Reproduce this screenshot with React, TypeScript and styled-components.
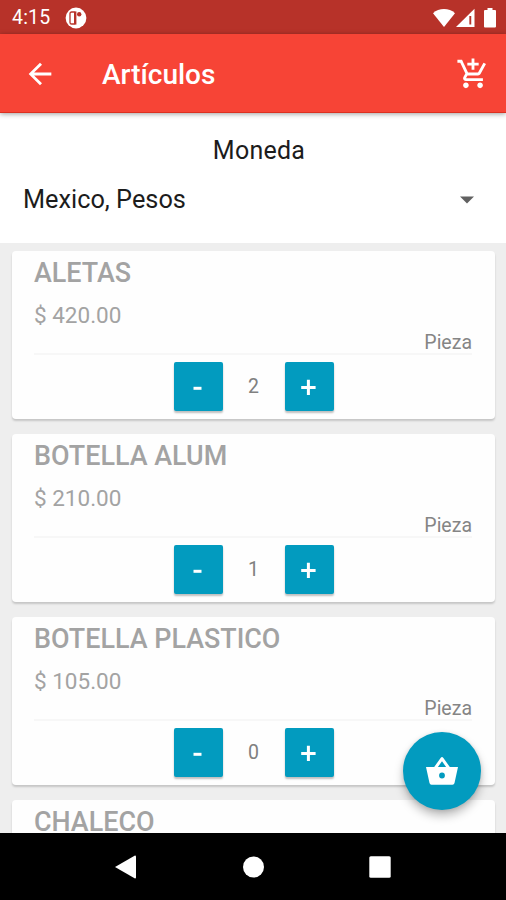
import React, { useState } from "react";
import styled, { createGlobalStyle } from "styled-components";
import { MdAddShoppingCart, MdArrowBack } from "react-icons/md";

const GlobalStyle = createGlobalStyle`
  * { box-sizing: border-box; }
  body { margin: 0; background: #eeeeee; font-family: Roboto, sans-serif; }
  button { font-family: inherit; border: 0; padding: 0; background: none; }
`;

const Screen = styled.div`
  position: relative;
  display: flex;
  flex-direction: column;
  width: 506px;
  height: 900px;
  overflow: hidden;
  background: #eeeeee;
`;

const StatusBar = styled.div`
  flex: none;
  display: flex;
  align-items: center;
  height: 34px;
  padding: 1px 10px 0 12px;
  background: #b73229;
  color: #fff;
`;

const Clock = styled.span`
  width: 53px;
  padding-top: 1px;
  font-size: 19.5px;
  line-height: 22px;
  letter-spacing: 0.2px;
`;

const StatusIcons = styled.div`
  display: flex;
  align-items: center;
  margin-left: auto;
`;

const BatterySlot = styled.div`
  display: flex;
  padding-left: 8px;
`;

const AppBar = styled.header`
  flex: none;
  display: flex;
  align-items: center;
  height: 79px;
  padding: 1px 16px 0 23px;
  background: #f74436;
  border-bottom: 1px solid #dc3020;
  color: #fff;
  box-shadow: 0 1px 5px rgba(0, 0, 0, 0.38);
  z-index: 1;
`;

const IconButton = styled.button`
  display: flex;
  color: #fff;
`;

const Title = styled.h1`
  flex: 1;
  margin: 2px 0 0 45px;
  font-size: 28px;
  font-weight: 500;
  line-height: 34px;
`;

const CurrencyPanel = styled.section`
  flex: none;
  height: 130px;
  padding: 21px 30px 0 23px;
  background: #fff;
`;

const CurrencyLabel = styled.div`
  padding-left: 19px;
  text-align: center;
  font-size: 25px;
  line-height: 34px;
  letter-spacing: 0.25px;
  color: #1c1c1c;
`;

const CurrencySelect = styled.button`
  display: flex;
  align-items: center;
  justify-content: space-between;
  width: 100%;
  margin-top: 15px;
  padding-right: 2px;
  font-size: 25.3px;
  line-height: 34px;
  color: #1c1c1c;
`;

const List = styled.main`
  flex: 1;
  min-height: 0;
  display: flex;
  flex-direction: column;
  gap: 15px;
  padding: 8px 11px 0 12px;
  overflow: hidden;
`;

const Card = styled.article`
  flex: none;
  height: 168px;
  padding: 5px 23px 0 22px;
  border-radius: 4px;
  background: #fefefe;
  box-shadow: 0 2px 2px rgba(0, 0, 0, 0.17);
`;

const Name = styled.h2`
  margin: 0;
  font-size: 26.9px;
  font-weight: 500;
  line-height: 34px;
  color: #a3a3a3;
`;

const Price = styled.div`
  margin-top: 11px;
  font-size: 22.5px;
  line-height: 28px;
  color: #a3a3a3;
`;

const Unit = styled.div`
  height: 26px;
  border-bottom: 2px solid #f7f7f7;
  text-align: right;
  font-size: 19.5px;
  line-height: 27px;
  color: #858585;
`;

const Stepper = styled.div`
  display: flex;
  justify-content: center;
  margin-top: 7px;
  padding-left: 1px;
`;

const StepButton = styled.button`
  display: flex;
  align-items: center;
  justify-content: center;
  width: 49px;
  height: 49px;
  border-radius: 2px;
  background: #029bbf;
  color: #fff;
  box-shadow: 0 2px 2px rgba(0, 0, 0, 0.25);
`;

const Quantity = styled.span`
  width: 62px;
  text-align: center;
  font-size: 19.5px;
  line-height: 50px;
  color: #808080;
`;

const BasketButton = styled.button`
  position: absolute;
  right: 25px;
  bottom: 90px;
  display: flex;
  align-items: center;
  justify-content: center;
  width: 78px;
  height: 78px;
  border-radius: 50%;
  background: #029bbf;
  color: #fff;
  box-shadow: 0 6px 10px rgba(0, 0, 0, 0.25), 0 1px 4px rgba(0, 0, 0, 0.12);
`;

const NavBar = styled.nav`
  flex: none;
  display: flex;
  align-items: center;
  justify-content: space-between;
  height: 67px;
  padding: 0 115px;
  background: #000;
`;

type Article = { name: string; price?: string; initial?: number };

const items: Article[] = [
  { name: "ALETAS", price: "$ 420.00", initial: 2 },
  { name: "BOTELLA ALUM", price: "$ 210.00", initial: 1 },
  { name: "BOTELLA PLASTICO", price: "$ 105.00", initial: 0 },
  { name: "CHALECO" },
];

function NotificationIcon() {
  return (
    <svg width="22" height="22" viewBox="0 0 22 22">
      <circle cx="11" cy="11" r="10.4" fill="#fff" />
      <path d="M9.6 5H6.600Q5 5 5 6.600v8.800Q5 17 6.600 17h3" fill="none" stroke="#b73229" strokeWidth="1.300" />
      <path d="M10.200 4.400v13.200" stroke="#b73229" strokeWidth="2.400" />
      <circle cx="14.200" cy="7.200" r="2.200" fill="#b73229" />
    </svg>
  );
}

function WifiIcon() {
  return (
    <svg width="24" height="20" viewBox="0 0 24 20">
      <path d="M12 19 1 5.200C4 2.400 7.900 1 12 1s8 1.400 11 4.200z" fill="#fff" />
    </svg>
  );
}

function SignalIcon() {
  return (
    <svg width="20" height="20" viewBox="0 0 20 20">
      <path d="M0 19 18.500.8V19z" fill="#fff" />
      <path d="M14.300 8v8.500" stroke="#b73229" strokeWidth="1.900" />
    </svg>
  );
}

function BatteryIcon() {
  return (
    <svg width="12" height="20" viewBox="0 0 12 20">
      <path d="M3.500 0h5v2H11q1 0 1 1v15.500q0 1-1 1H1q-1 0-1-1V3q0-1 1-1h2.500z" fill="#fff" />
    </svg>
  );
}

function BasketIcon() {
  return (
    <svg width="32" height="28" viewBox="0 0 32 28">
      <path
        fillRule="evenodd"
        d="M0 10h8.200L14.600.9Q16-.7 17.400.9L23.800 10H32l-3.500 16q-.4 1.700-2 1.700h-21q-1.600 0-2-1.700zM11.900 10h8.200L16 4.200zM16 15.600a2.900 2.900 0 1 0 0 5.800 2.900 2.900 0 0 0 0-5.800z"
        fill="#fff"
      />
    </svg>
  );
}

function Counter({ initial }: { initial: number }) {
  const [count, setCount] = useState(initial);
  return (
    <Stepper>
      <StepButton aria-label="Quitar" onClick={() => setCount(Math.max(0, count - 1))}>
        <svg width="16" height="16" viewBox="0 0 16 16">
          <path d="M3.500 9.300h8" stroke="#fff" strokeWidth="3" />
        </svg>
      </StepButton>
      <Quantity>{count}</Quantity>
      <StepButton aria-label="Agregar" onClick={() => setCount(count + 1)}>
        <svg width="16" height="16" viewBox="0 0 16 16">
          <path d="M.2 8.500h14.400M7.400 .8v15.200" stroke="#fff" strokeWidth="3" />
        </svg>
      </StepButton>
    </Stepper>
  );
}

function Item({ name, price, initial = 0 }: Article) {
  return (
    <Card>
      <Name>{name}</Name>
      {price && (
        <>
          <Price>{price}</Price>
          <Unit>Pieza</Unit>
          <Counter initial={initial} />
        </>
      )}
    </Card>
  );
}

export default function App() {
  return (
    <>
      <GlobalStyle />
      <Screen>
        <StatusBar>
          <Clock>4:15</Clock>
          <NotificationIcon />
          <StatusIcons>
            <WifiIcon />
            <SignalIcon />
            <BatterySlot>
              <BatteryIcon />
            </BatterySlot>
          </StatusIcons>
        </StatusBar>
        <AppBar>
          <IconButton aria-label="Volver">
            <MdArrowBack size={34} />
          </IconButton>
          <Title>Artículos</Title>
          <IconButton aria-label="Carrito">
            <MdAddShoppingCart size={34} />
          </IconButton>
        </AppBar>
        <CurrencyPanel>
          <CurrencyLabel>Moneda</CurrencyLabel>
          <CurrencySelect>
            Mexico, Pesos
            <svg width="14" height="8" viewBox="0 0 14 8">
              <path d="M0 .5h14L7 7.500z" fill="#616161" />
            </svg>
          </CurrencySelect>
        </CurrencyPanel>
        <List>
          {items.map((item) => (
            <Item key={item.name} {...item} />
          ))}
        </List>
        <NavBar>
          <svg width="22" height="24" viewBox="0 0 22 24">
            <path d="M0 12 20 .5q1 0 1 1v21q0 1-1 1z" fill="#fff" />
          </svg>
          <svg width="22" height="22" viewBox="0 0 22 22">
            <circle cx="11.500" cy="11" r="10.500" fill="#fff" />
          </svg>
          <svg width="22" height="22" viewBox="0 0 22 22">
            <rect x=".3" y=".3" width="21.400" height="21.400" rx="1.500" fill="#fff" />
          </svg>
        </NavBar>
        <BasketButton aria-label="Ver canasta">
          <BasketIcon />
        </BasketButton>
      </Screen>
    </>
  );
}
